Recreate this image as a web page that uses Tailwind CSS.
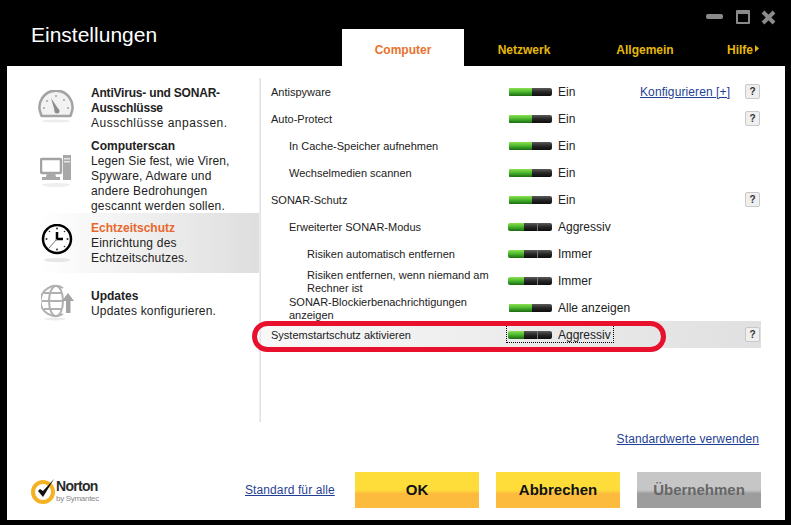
<!DOCTYPE html>
<html lang="de">
<head>
<meta charset="utf-8">
<title>Einstellungen</title>
<script src="https://cdn.jsdelivr.net/npm/@tailwindcss/browser@4"></script>
</head>
<body class="bg-black">
<div class="w-[791px] h-[525px] bg-black flex flex-col font-['Liberation_Sans',Arial,sans-serif] overflow-hidden">

  <!-- Title bar + tabs -->
  <header class="h-[66px] flex">
    <h1 class="w-[342px] pl-[31px] pt-[20px] text-[21px] leading-[30px] text-white">Einstellungen</h1>
    <div class="flex-1 flex flex-col">
      <div class="h-[29px] flex items-start pt-[10px] pl-[364px]">
        <span class="block w-[17px] h-[5px] mt-[4px] bg-[#8a8a8a] rounded-[2px]"></span>
        <span class="block w-[14px] h-[14px] ml-[13px] border-2 border-t-[4px] border-[#8a8a8a] rounded-[1px]"></span>
        <svg class="ml-[11px]" width="15" height="15" viewBox="0 0 15 15"><path d="M2 2 L13 13 M13 2 L2 13" stroke="#8a8a8a" stroke-width="4"/></svg>
      </div>
      <nav class="h-[37px] flex text-[12px] font-bold text-[#e6b90c]">
        <a class="w-[122px] bg-white text-[#e8722c] text-center pt-[12px]">Computer</a>
        <a class="w-[120px] text-center pt-[12px]">Netzwerk</a>
        <a class="w-[122px] text-center pt-[12px]">Allgemein</a>
        <a class="pl-[21px] pt-[12px] flex items-start gap-[2px]">Hilfe<svg class="mt-[4px]" width="4" height="7" viewBox="0 0 4 7"><path d="M0 0 L4 3.5 L0 7 Z" fill="#e6b90c"/></svg></a>
      </nav>
    </div>
  </header>

  <!-- Content -->
  <main class="mx-[7px] mr-[6px] h-[454px] bg-white flex flex-col text-[#222]">
    <div class="h-[356px] flex">

      <!-- Sidebar -->
      <aside class="w-[252px] pt-[19px] text-[12px] leading-[15px] tracking-[0.2px]">
        <div class="flex h-[53px]">
          <div class="w-[84px] pl-[31px] pt-[5px]">
            <svg width="36" height="36" viewBox="0 0 36 36">
              <path d="M3 24 A16.500 16.500 0 1 1 33 24 Q33.500 26 31 26 H5 Q2.500 26 3 24 Z" fill="#f2f2f2" stroke="#a3a3a3" stroke-width="2.500"/>
              <path d="M13 8 L21 20 L17 22 Z" fill="#8c8c8c"/>
              <circle cx="19" cy="21" r="2.500" fill="#8c8c8c"/>
              <g fill="#a5a5a5"><circle cx="6" cy="18" r="1"/><circle cx="9" cy="11" r="1"/><circle cx="18" cy="6" r="1"/><circle cx="26" cy="10" r="1"/><circle cx="30" cy="18" r="1"/></g>
              <ellipse cx="18" cy="31" rx="14" ry="1.500" fill="#ececec"/>
            </svg>
          </div>
          <div class="pt-px"><b class="font-bold tracking-[-0.2px]">AntiVirus- und SONAR-<br>Ausschlüsse</b><br><span class="tracking-[0.5px]">Ausschlüsse anpassen.</span></div>
        </div>
        <div class="flex h-[75px]">
          <div class="w-[84px] pl-[33px] pt-[16px]">
            <svg width="32" height="42" viewBox="0 0 32 42">
              <rect x="1" y="5" width="20" height="14" rx="1" fill="#fff" stroke="#a3a3a3" stroke-width="2.500"/>
              <rect x="23" y="1" width="8" height="25" fill="#a8a8a8"/>
              <rect x="24" y="4" width="6" height="1.500" fill="#e5e5e5"/><rect x="24" y="7" width="6" height="1.500" fill="#e5e5e5"/>
              <path d="M7 19 H15 L16 23 H20 V26 H2 V23 H6 Z" fill="#a8a8a8"/>
              <ellipse cx="16" cy="31" rx="14" ry="2" fill="#eeeeee"/>
            </svg>
          </div>
          <div class="pt-px"><b class="font-bold tracking-normal">Computerscan</b><br><span class="tracking-[0.1px]">Legen Sie fest, wie Viren,</span><br>Spyware, Adware und<br>andere Bedrohungen<br>gescannt werden sollen.</div>
        </div>
        <div class="flex h-[60px] pt-[7px] ml-[33px] bg-linear-to-r from-white to-[#dedede]">
          <div class="w-[51px] pl-px pt-[4px]">
            <svg width="32" height="40" viewBox="0 0 32 40">
              <circle cx="16" cy="15" r="14" fill="#fff" stroke="#000" stroke-width="2.500"/>
              <path d="M16 8 V15 H22" fill="none" stroke="#000" stroke-width="2.500"/>
              <path d="M16 15 L8 24" stroke="#777" stroke-width="1"/>
              <g fill="#333"><circle cx="16" cy="4.500" r="1"/><circle cx="16" cy="25.500" r="1"/><circle cx="5.500" cy="15" r="1"/><circle cx="26.500" cy="15" r="1"/><circle cx="8.500" cy="7.500" r="0.800"/><circle cx="23.500" cy="7.500" r="0.800"/><circle cx="23.500" cy="22.500" r="0.800"/></g>
              <ellipse cx="16" cy="36" rx="13" ry="2" fill="#e6e6e6"/>
            </svg>
          </div>
          <div class="pt-px"><b class="font-bold text-[#e8672c] tracking-normal">Echtzeitschutz</b><br>Einrichtung des<br>Echtzeitschutzes.</div>
        </div>
        <div class="flex mt-[15px]">
          <div class="w-[84px] pl-[34px] -mt-[4px]">
            <svg width="34" height="38" viewBox="0 0 34 38">
              <g fill="none" stroke="#b0b0b0" stroke-width="2">
                <path d="M22 4 A15 15 0 1 0 22 30"/>
                <ellipse cx="15" cy="17" rx="7" ry="15"/>
                <path d="M1 17 H22 M3 9 H21 M3 25 H21"/>
              </g>
              <path d="M27 9 L33 17 H29.500 V29 H25 V17 H21 Z" fill="#a3a3a3"/>
              <ellipse cx="14" cy="35" rx="11" ry="1.500" fill="#ececec"/>
            </svg>
          </div>
          <div class="pt-px"><b class="font-bold tracking-normal">Updates</b><br>Updates konfigurieren.</div>
        </div>
      </aside>

      <!-- Separator -->
      <div class="w-[2px] mt-[12px] bg-linear-to-r from-[#f4f4f4] to-[#dcdcdc]"></div>

      <!-- Settings rows -->
      <section class="relative w-[500px] mt-[12px] text-[11px] leading-[13px]">
        <div class="h-[27px] flex items-center">
          <div class="w-[247px] pl-[10px] pt-[2px]">Antispyware</div>
          <div class="w-[44px] pl-[1px] flex h-[8px] rounded-[2px] overflow-hidden"><i class="w-[23px] bg-linear-to-b from-[#8be04f] via-[#46b52c] to-[#1c6a12]"></i><i class="w-[20px] bg-linear-to-b from-[#5c5c5c] via-[#262626] to-[#0d0d0d]"></i></div>
          <div class="w-[88px] pl-[6px] pt-[2px] text-[12px]">Ein</div>
          <a class="pt-[2px] text-[12px] text-[#1f3f94] underline tracking-[0.1px]">Konfigurieren [+]</a>
          <button class="ml-auto mr-[1px] w-[15px] h-[15px] bg-[#efefef] border border-[#c9c9c9] rounded-[2px] text-[10px] font-bold leading-[12px] text-[#333]">?</button>
        </div>
        <div class="h-[27px] flex items-center">
          <div class="w-[247px] pl-[10px] pt-[2px]">Auto-Protect</div>
          <div class="w-[44px] pl-[1px] flex h-[8px] rounded-[2px] overflow-hidden"><i class="w-[23px] bg-linear-to-b from-[#8be04f] via-[#46b52c] to-[#1c6a12]"></i><i class="w-[20px] bg-linear-to-b from-[#5c5c5c] via-[#262626] to-[#0d0d0d]"></i></div>
          <div class="pl-[6px] pt-[2px] text-[12px]">Ein</div>
          <button class="ml-auto mr-[1px] w-[15px] h-[15px] bg-[#efefef] border border-[#c9c9c9] rounded-[2px] text-[10px] font-bold leading-[12px] text-[#333]">?</button>
        </div>
        <div class="h-[27px] flex items-center">
          <div class="w-[247px] pl-[28px] pt-[2px]">In Cache-Speicher aufnehmen</div>
          <div class="w-[44px] pl-[1px] flex h-[8px] rounded-[2px] overflow-hidden"><i class="w-[23px] bg-linear-to-b from-[#8be04f] via-[#46b52c] to-[#1c6a12]"></i><i class="w-[20px] bg-linear-to-b from-[#5c5c5c] via-[#262626] to-[#0d0d0d]"></i></div>
          <div class="pl-[6px] pt-[2px] text-[12px]">Ein</div>
        </div>
        <div class="h-[27px] flex items-center">
          <div class="w-[247px] pl-[28px] pt-[2px]">Wechselmedien scannen</div>
          <div class="w-[44px] pl-[1px] flex h-[8px] rounded-[2px] overflow-hidden"><i class="w-[23px] bg-linear-to-b from-[#8be04f] via-[#46b52c] to-[#1c6a12]"></i><i class="w-[20px] bg-linear-to-b from-[#5c5c5c] via-[#262626] to-[#0d0d0d]"></i></div>
          <div class="pl-[6px] pt-[2px] text-[12px]">Ein</div>
        </div>
        <div class="h-[27px] flex items-center">
          <div class="w-[247px] pl-[10px] pt-[2px]">SONAR-Schutz</div>
          <div class="w-[44px] pl-[1px] flex h-[8px] rounded-[2px] overflow-hidden"><i class="w-[23px] bg-linear-to-b from-[#8be04f] via-[#46b52c] to-[#1c6a12]"></i><i class="w-[20px] bg-linear-to-b from-[#5c5c5c] via-[#262626] to-[#0d0d0d]"></i></div>
          <div class="pl-[6px] pt-[2px] text-[12px]">Ein</div>
          <button class="ml-auto mr-[1px] w-[15px] h-[15px] bg-[#efefef] border border-[#c9c9c9] rounded-[2px] text-[10px] font-bold leading-[12px] text-[#333]">?</button>
        </div>
        <div class="h-[27px] flex items-center">
          <div class="w-[247px] pl-[28px] pt-[2px]">Erweiterter SONAR-Modus</div>
          <div class="w-[44px] flex h-[8px] rounded-[2px] overflow-hidden"><i class="w-[16px] bg-linear-to-b from-[#8be04f] via-[#46b52c] to-[#1c6a12]"></i><i class="w-[14px] border-r border-[#777] bg-linear-to-b from-[#5c5c5c] via-[#262626] to-[#0d0d0d]"></i><i class="w-[14px] bg-linear-to-b from-[#5c5c5c] via-[#262626] to-[#0d0d0d]"></i></div>
          <div class="pl-[6px] pt-[2px] text-[12px]">Aggressiv</div>
        </div>
        <div class="h-[27px] flex items-center">
          <div class="w-[247px] pl-[46px] pt-[2px]">Risiken automatisch entfernen</div>
          <div class="w-[44px] flex h-[8px] rounded-[2px] overflow-hidden"><i class="w-[16px] bg-linear-to-b from-[#8be04f] via-[#46b52c] to-[#1c6a12]"></i><i class="w-[14px] border-r border-[#777] bg-linear-to-b from-[#5c5c5c] via-[#262626] to-[#0d0d0d]"></i><i class="w-[14px] bg-linear-to-b from-[#5c5c5c] via-[#262626] to-[#0d0d0d]"></i></div>
          <div class="pl-[6px] pt-[2px] text-[12px]">Immer</div>
        </div>
        <div class="h-[27px] flex items-center">
          <div class="w-[247px] pl-[46px] pt-[2px]">Risiken entfernen, wenn niemand am<br>Rechner ist</div>
          <div class="w-[44px] flex h-[8px] rounded-[2px] overflow-hidden"><i class="w-[16px] bg-linear-to-b from-[#8be04f] via-[#46b52c] to-[#1c6a12]"></i><i class="w-[14px] border-r border-[#777] bg-linear-to-b from-[#5c5c5c] via-[#262626] to-[#0d0d0d]"></i><i class="w-[14px] bg-linear-to-b from-[#5c5c5c] via-[#262626] to-[#0d0d0d]"></i></div>
          <div class="pl-[6px] pt-[2px] text-[12px]">Immer</div>
        </div>
        <div class="h-[27px] flex items-center">
          <div class="w-[247px] pl-[28px] pt-[2px]">SONAR-Blockierbenachrichtigungen<br>anzeigen</div>
          <div class="w-[44px] pl-[1px] flex h-[8px] rounded-[2px] overflow-hidden"><i class="w-[23px] bg-linear-to-b from-[#8be04f] via-[#46b52c] to-[#1c6a12]"></i><i class="w-[20px] bg-linear-to-b from-[#5c5c5c] via-[#262626] to-[#0d0d0d]"></i></div>
          <div class="pl-[6px] pt-[2px] text-[12px]">Alle anzeigen</div>
        </div>
        <div class="h-[27px] flex items-center bg-linear-to-r from-[#f8f8f8] to-[#e0e0e0]">
          <div class="w-[247px] pl-[10px] pt-[2px]">Systemstartschutz aktivieren</div>
          <div class="w-[44px] flex h-[8px] rounded-[2px] overflow-hidden"><i class="w-[16px] bg-linear-to-b from-[#8be04f] via-[#46b52c] to-[#1c6a12]"></i><i class="w-[14px] border-r border-[#777] bg-linear-to-b from-[#5c5c5c] via-[#262626] to-[#0d0d0d]"></i><i class="w-[14px] bg-linear-to-b from-[#5c5c5c] via-[#262626] to-[#0d0d0d]"></i></div>
          <div class="pl-[6px] pt-[2px] text-[12px]">Aggressiv</div>
          <button class="ml-auto mr-[1px] w-[15px] h-[15px] bg-[#efefef] border border-[#c9c9c9] rounded-[2px] text-[10px] font-bold leading-[12px] text-[#333]">?</button>
        </div>
        <!-- focus rectangle and red annotation over the last row -->
        <div class="absolute left-[245px] top-[247px] w-[108px] h-[18px] border border-dotted border-black"></div>
        <div class="absolute left-[-9px] top-[243px] w-[414px] h-[31px] border-[5px] border-[#e8112d] rounded-[16px]"></div>
      </section>
    </div>

    <div class="h-[34px] pt-[10px] pr-[26px] text-right text-[12px] leading-[15px] tracking-[0.1px]">
      <a class="text-[#1f3f94] underline">Standardwerte verwenden</a>
    </div>

    <!-- Footer -->
    <footer class="mt-[16px] h-[36px] flex items-center">
      <div class="w-[238px] pl-[24px] flex items-center">
        <svg width="27" height="27" viewBox="0 0 27 27">
          <circle cx="12" cy="15" r="10" fill="#fff" stroke="#f4b223" stroke-width="4"/>
          <path d="M7 14 L12 20 L23 2 L12 14 L9 12 Z" fill="#111"/>
        </svg>
        <div class="-ml-[2px] mt-[1px]">
          <div class="text-[14px] leading-[14px] font-bold tracking-[-0.7px] text-[#2b2b2b]">Norton</div>
          <div class="mt-[1px] text-[8px] leading-[9px] tracking-[-0.3px] text-[#888]">by Symantec</div>
        </div>
      </div>
      <a class="w-[110px] text-[12px] text-[#1f3f94] underline tracking-[0.1px]">Standard für alle</a>
      <button class="w-[124px] h-[36px] text-[15px] font-bold text-[#111] bg-linear-to-b from-[#fedc3a] from-50% to-[#fdbb3e] to-60%">OK</button>
      <button class="ml-[17px] w-[124px] h-[36px] text-[15px] font-bold text-[#111] bg-linear-to-b from-[#fedc3a] from-50% to-[#fdbb3e] to-60%">Abbrechen</button>
      <button class="ml-[17px] w-[124px] h-[36px] text-[15px] font-bold text-[#666] bg-linear-to-b from-[#c6c6c6] from-50% to-[#9d9d9d] to-60%">Übernehmen</button>
    </footer>
  </main>
</div>
</body>
</html>
